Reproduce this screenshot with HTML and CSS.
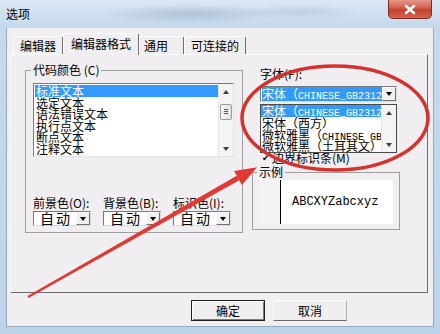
FILE: index.html
```html
<!DOCTYPE html>
<html lang="zh-CN">
<head>
<meta charset="utf-8">
<title>选项</title>
<link rel="stylesheet" href="styles.css">
</head>
<body>
<div class="win">
  <div class="titlebar">
    <span class="title">选项</span>
    <div class="close"><svg width="14" height="11" viewBox="0 0 14 11"><path d="M3 2 L11 9 M11 2 L3 9" stroke="#fff" stroke-width="2.6" stroke-linecap="round"/></svg></div>
  </div>
  <div class="frame">
    <div class="client">
      <div class="tabs">
        <div class="tab">编辑器</div>
        <div class="tab active">编辑器格式</div>
        <div class="tab narrow">通用</div>
        <div class="tab">可连接的</div>
      </div>
      <div class="panel">
        <fieldset class="group codes">
          <legend>代码颜色 (C)</legend>
          <div class="listbox">
            <ul class="items">
              <li class="sel">标准文本</li>
              <li>选定文本</li>
              <li>语法错误文本</li>
              <li>执行点文本</li>
              <li>断点文本</li>
              <li>注释文本</li>
            </ul>
            <div class="vscroll">
              <div class="sbtn up"></div>
              <div class="track"><div class="thumb"></div></div>
              <div class="sbtn down"></div>
            </div>
          </div>
          <div class="colors">
            <div class="field"><span class="lbl">前景色(O):</span><div class="select"><span class="stxt">自动</span><span class="dbtn"></span></div></div>
            <div class="field"><span class="lbl">背景色(B):</span><div class="select"><span class="stxt">自动</span><span class="dbtn"></span></div></div>
            <div class="field"><span class="lbl">标识色(I):</span><div class="select"><span class="stxt">自动</span><span class="dbtn"></span></div></div>
          </div>
        </fieldset>
        <div class="right">
          <div class="lbl font-lbl">字体(F):</div>
          <div class="combo"><span class="ctext">宋体（<span class="lat">CHINESE_GB2312</span>）</span><span class="dbtn"></span></div>
          <div class="check"><span class="mark">✔</span><span>边界标识条(M)</span></div>
          <fieldset class="group sample">
            <legend>示例</legend>
            <div class="samplebox"><div class="gutter"></div><div class="stext">ABCXYZabcxyz</div></div>
          </fieldset>
          <div class="droplist">
            <ul class="ditems">
              <li class="sel">宋体（<span class="lat">CHINESE_GB2312</span>）</li>
              <li>宋体（西方）</li>
              <li>微软雅黑（<span class="lat">CHINESE_GB2312</span>）</li>
              <li>微软雅黑（土耳其文）</li>
            </ul>
            <div class="vscroll">
              <div class="sbtn up"></div>
              <div class="track"></div>
              <div class="sbtn down"></div>
            </div>
          </div>
        </div>
      </div>
      <div class="buttons">
        <div class="btn default">确定</div>
        <div class="btn cancel">取消</div>
      </div>
    </div>
  </div>
  <svg class="annot" width="440" height="334" viewBox="0 0 440 334">
    <ellipse cx="335" cy="118" rx="93" ry="52" fill="none" stroke="#d6322d" stroke-width="3.5"/>
    <polygon points="28.5,297.9 27.5,296.1 236.8,175.8 239.2,180.2" fill="#e13a35"/>
    <polygon points="257.1,167.2 234.1,171 241.9,185" fill="#e13a35"/>
  </svg>
</div>
</body>
</html>
```

FILE: styles.css
```css
* { box-sizing: border-box; }
html, body { margin: 0; padding: 0; }
body {
  width: 440px;
  height: 334px;
  overflow: hidden;
  background: #bfd5eb;
  font: 12px/14px "Noto Sans CJK SC", "Microsoft YaHei", sans-serif;
  color: #000;
}
ul { list-style: none; margin: 0; padding: 0; }

.win {
  position: relative;
  width: 440px;
  height: 334px;
  display: flex;
  flex-direction: column;
  background: linear-gradient(180deg, #d5e3f1 0, #c6d9ec 30px, #bdd3e9 100%);
}

.titlebar {
  height: 28px;
  flex: none;
  display: flex;
  justify-content: space-between;
  align-items: center;
  padding: 0 8px 0 6px;
  background:
    radial-gradient(ellipse 90px 10px at 190px 14px, rgba(120,140,165,.35), transparent),
    radial-gradient(ellipse 60px 8px at 300px 12px, rgba(140,160,185,.25), transparent),
    linear-gradient(180deg, #dbe7f3, #c4d8ec);
}
.title { line-height: 14px; }
.close {
  align-self: flex-start;
  width: 44px;
  height: 19px;
  display: flex;
  align-items: center;
  justify-content: center;
  border: 1px solid #7b2c23;
  border-top: 0;
  border-radius: 0 0 5px 5px;
  background: linear-gradient(180deg, #e6978a 0, #d25d4b 45%, #c23f2d 55%, #d7634e 100%);
}

.frame {
  flex: 1;
  display: flex;
  padding: 0 6px 7px 6px;
}
.client {
  flex: 1;
  display: flex;
  flex-direction: column;
  background: #f0eef1;
  border: 1px solid #97a9bc;
  border-top: 0;
}

.tabs {
  display: flex;
  align-items: flex-end;
  height: 21px;
  margin-top: 5px;
  padding-left: 6px;
  position: relative;
  z-index: 1;
}
.tab {
  height: 18px;
  padding: 0 6px;
  line-height: 17px;
  white-space: nowrap;
  border: 1px solid;
  border-color: #fff #6e6e6e transparent #fff;
  border-bottom: 0;
  border-radius: 2px 2px 0 0;
  background: #f0eef1;
}
.tab.active {
  height: 22px;
  margin-bottom: -1px;
  padding: 0 7px;
  line-height: 19px;
}
.tab.narrow {
  width: 45px;
  padding: 0 0 0 4px;
}

.panel {
  margin-left: 3px;
  width: 418px;
  height: 239px;
  border: 1px solid;
  border-color: #fff #6b6b6b #6b6b6b #fff;
  display: flex;
  align-items: flex-start;
  gap: 9px;
  padding: 8px 0 0 14px;
}

fieldset.group {
  margin: 0;
  min-width: 0;
  border: 1px solid #9f9f9f;
}
fieldset.group legend {
  padding: 0 2px;
  margin-left: -2px;
  line-height: 14px;
}
.codes {
  width: 218px;
  padding: 6px 7px 6px 7px;
}

.listbox {
  display: flex;
  width: 201px;
  height: 74px;
  border: 1px solid;
  border-color: #7c7c7c #e3e3e3 #e3e3e3 #7c7c7c;
  background: #fff;
}
.items {
  flex: 1;
  min-width: 0;
  padding: 1px 0 0 1px;
}
.items li {
  height: 11.5px;
  line-height: 11.5px;
  padding-left: 1px;
  white-space: nowrap;
}
.sel { background: #3399ff; color: #fff; }

.vscroll {
  width: 15px;
  flex: none;
  display: flex;
  flex-direction: column;
  background: #f4f4f4;
  border-left: 1px solid #e6e6e6;
}
.sbtn {
  height: 15px;
  position: relative;
  flex: none;
}
.sbtn::before {
  content: "";
  position: absolute;
  left: 50%;
  top: 50%;
  margin: -2px 0 0 -3.5px;
  border-left: 3.5px solid transparent;
  border-right: 3.5px solid transparent;
}
.sbtn.up::before { border-bottom: 4px solid #404040; }
.sbtn.down::before { border-top: 4px solid #404040; }
.track { flex: 1; }
.thumb {
  position: relative;
  margin: 5px 1px 0 1px;
  height: 16px;
  border: 1px solid #9a9a9a;
  border-radius: 2px;
  background: linear-gradient(90deg, #f6f6f6, #e2e2e2);
}
.thumb::before {
  content: "";
  position: absolute;
  left: 3px;
  right: 3px;
  top: 4px;
  height: 6px;
  background: linear-gradient(#555 1px, transparent 1px) 0 0 / 100% 2px repeat-y;
}

.colors {
  display: flex;
  gap: 12px;
  margin-top: 39px;
}
.field {
  display: flex;
  flex-direction: column;
  width: 58px;
}
.lbl { line-height: 14px; white-space: nowrap; }
.select {
  margin-top: 1px;
  height: 15px;
  display: flex;
  align-items: center;
  justify-content: space-between;
  border: 1px solid;
  border-color: #7a7a7a #dcdcdc #dcdcdc #7a7a7a;
  background: #fff;
  padding-left: 6px;
}
.stxt {
  font-size: 14px;
  line-height: 13px;
  letter-spacing: 2px;
}
.dbtn {
  position: relative;
  flex: none;
  width: 14px;
  height: 13px;
  background: #f0f0f0;
  border: 1px solid;
  border-color: #fff #707070 #707070 #fff;
}
.dbtn::before {
  content: "";
  position: absolute;
  left: 50%;
  top: 50%;
  margin: -2px 0 0 -3.5px;
  border-left: 3.5px solid transparent;
  border-right: 3.5px solid transparent;
  border-top: 4px solid #000;
}

.right {
  position: relative;
  width: 148px;
  display: flex;
  flex-direction: column;
}
.font-lbl { margin: 4px 0 0 8px; }
.combo {
  margin: 5px 0 0 8px;
  width: 137px;
  height: 16px;
  display: flex;
  align-items: center;
  padding-left: 1px;
  border: 1px solid;
  border-color: #7a7a7a #dedede #dedede #7a7a7a;
  background: #fff;
  overflow: hidden;
}
.ctext {
  flex: 1;
  min-width: 0;
  height: 14px;
  line-height: 14px;
  overflow: hidden;
  white-space: nowrap;
  background: #3399ff;
  color: #fff;
}
.lat {
  font-family: "Liberation Mono", monospace;
  font-size: 10px;
}
.combo .dbtn { height: 14px; }

.check {
  margin: 49px 0 0 8px;
  height: 14px;
  line-height: 14px;
  display: flex;
  align-items: center;
  white-space: nowrap;
}
.mark {
  font-family: "DejaVu Sans", sans-serif;
  font-size: 9px;
  width: 10px;
  margin: 0 0 0 2px;
}

.sample {
  margin-top: 4px;
  width: 148px;
  padding: 1px 6px 5px 6px;
}
.sample legend { margin-left: -1px; }
.samplebox {
  display: flex;
  width: 134px;
  height: 44px;
  background: #fff;
}
.gutter {
  width: 22px;
  background: #f3f3f4;
  border-right: 1px solid #000;
}
.stext {
  display: flex;
  align-items: center;
  padding-left: 11px;
  font: 12px "Liberation Mono", monospace;
}

.droplist {
  position: absolute;
  left: 8px;
  top: 41px;
  width: 137px;
  height: 49px;
  display: flex;
  border: 1px solid #4a4a4a;
  background: #fff;
  z-index: 2;
}
.ditems {
  flex: 1;
  min-width: 0;
  overflow: hidden;
}
.ditems li {
  height: 11.75px;
  line-height: 11.75px;
  padding-left: 1px;
  white-space: nowrap;
  overflow: hidden;
}

.buttons {
  display: flex;
  gap: 8px;
  margin: 7px 0 0 184px;
}
.btn {
  width: 74px;
  height: 21px;
  display: flex;
  align-items: center;
  justify-content: center;
  line-height: 14px;
  background: #f0eef1;
}
.btn.default {
  border: 1px solid #1e1e1e;
  box-shadow: inset 1px 1px 0 #fff, inset -1px -1px 0 #7a7a7a;
}
.btn.cancel {
  border: 1px solid;
  border-color: #fff #b0b0b0 #6a6a6a #fff;
}

.annot {
  position: absolute;
  left: 0;
  top: 0;
  pointer-events: none;
  z-index: 5;
}
```
